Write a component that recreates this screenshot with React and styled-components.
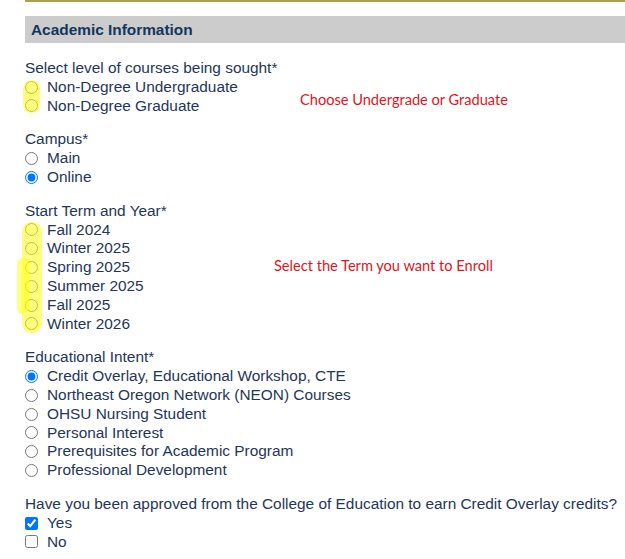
import React from "react";
import styled, { createGlobalStyle } from "styled-components";

const Global = createGlobalStyle`
  html, body { margin: 0; padding: 0; background: #fff; }
  body { font-family: "Liberation Sans", Arial, sans-serif; }
`;

const Page = styled.div`
  width: 625px;
  height: 559px;
  overflow: hidden;
  padding-left: 25px;
  box-sizing: border-box;
  display: flex;
  flex-direction: column;
  gap: 15px;
  color: #1f3657;
  font-size: 15.4px;
`;

const Top = styled.div`
  display: flex;
  flex-direction: column;
  gap: 14px;
  margin-bottom: 1px;
`;

const TopRule = styled.div`
  height: 2px;
  background: #b49c4c;
`;

const SectionHeader = styled.h2`
  margin: 0;
  height: 27px;
  background: #cccccc;
  color: #12365e;
  font-size: 15.4px;
  font-weight: bold;
  line-height: 27px;
  padding-left: 6px;
`;

const Group = styled.div`
  position: relative;
  display: flex;
  flex-direction: column;
  line-height: 18.8px;
`;

const Label = styled.div``;

const Option = styled.label`
  display: flex;
  align-items: center;
  height: 18.8px;
  gap: 9px;
`;

const Radio = styled.input.attrs({ type: "radio" })`
  width: 13px;
  height: 13px;
  margin: 0;
  flex: none;
  accent-color: #0075ff;
`;

const Check = styled.input.attrs({ type: "checkbox" })`
  width: 13px;
  height: 13px;
  margin: 0;
  flex: none;
  accent-color: #0075ff;
`;

const Highlight = styled.div`
  position: absolute;
  z-index: 2;
  background: rgba(255, 255, 20, 0.55);
  border-radius: 9px;
  pointer-events: none;
`;

const Note = styled.div`
  position: absolute;
  color: #e0141e;
  font-family: Lato, "Open Sans", sans-serif;
  font-size: 14.6px;
  line-height: 16px;
  white-space: nowrap;
`;

function RadioGroup({ name, label, options, checked, children }) {
  return (
    <Group>
      <Label>{label}</Label>
      {options.map((o) => (
        <Option key={o}>
          <Radio name={name} defaultChecked={o === checked} />
          {o}
        </Option>
      ))}
      {children}
    </Group>
  );
}

export default function App() {
  return (
    <Page>
      <Global />
      <Top>
        <TopRule />
        <SectionHeader>Academic Information</SectionHeader>
      </Top>

      <RadioGroup
        name="level"
        label="Select level of courses being sought*"
        options={["Non-Degree Undergraduate", "Non-Degree Graduate"]}
      >
        <Highlight style={{ left: -2, top: 21, width: 17, height: 33 }} />
        <Note style={{ left: 275, top: 33 }}>Choose Undergrade or Graduate</Note>
      </RadioGroup>

      <RadioGroup
        name="campus"
        label="Campus*"
        options={["Main", "Online"]}
        checked="Online"
      />

      <RadioGroup
        name="term"
        label="Start Term and Year*"
        options={[
          "Fall 2024",
          "Winter 2025",
          "Spring 2025",
          "Summer 2025",
          "Fall 2025",
          "Winter 2026",
        ]}
      >
        <Highlight style={{ left: -3, top: 20, width: 20, height: 111 }} />
        <Highlight style={{ left: -8, top: 56, width: 12, height: 56, borderRadius: 8 }} />
        <Note style={{ left: 249, top: 56 }}>Select the Term you want to Enroll</Note>
      </RadioGroup>

      <RadioGroup
        name="intent"
        label="Educational Intent*"
        options={[
          "Credit Overlay, Educational Workshop, CTE",
          "Northeast Oregon Network (NEON) Courses",
          "OHSU Nursing Student",
          "Personal Interest",
          "Prerequisites for Academic Program",
          "Professional Development",
        ]}
        checked="Credit Overlay, Educational Workshop, CTE"
      />

      <Group>
        <Label>
          Have you been approved from the College of Education to earn Credit Overlay credits?
        </Label>
        <Option>
          <Check defaultChecked />
          Yes
        </Option>
        <Option>
          <Check />
          No
        </Option>
      </Group>
    </Page>
  );
}
